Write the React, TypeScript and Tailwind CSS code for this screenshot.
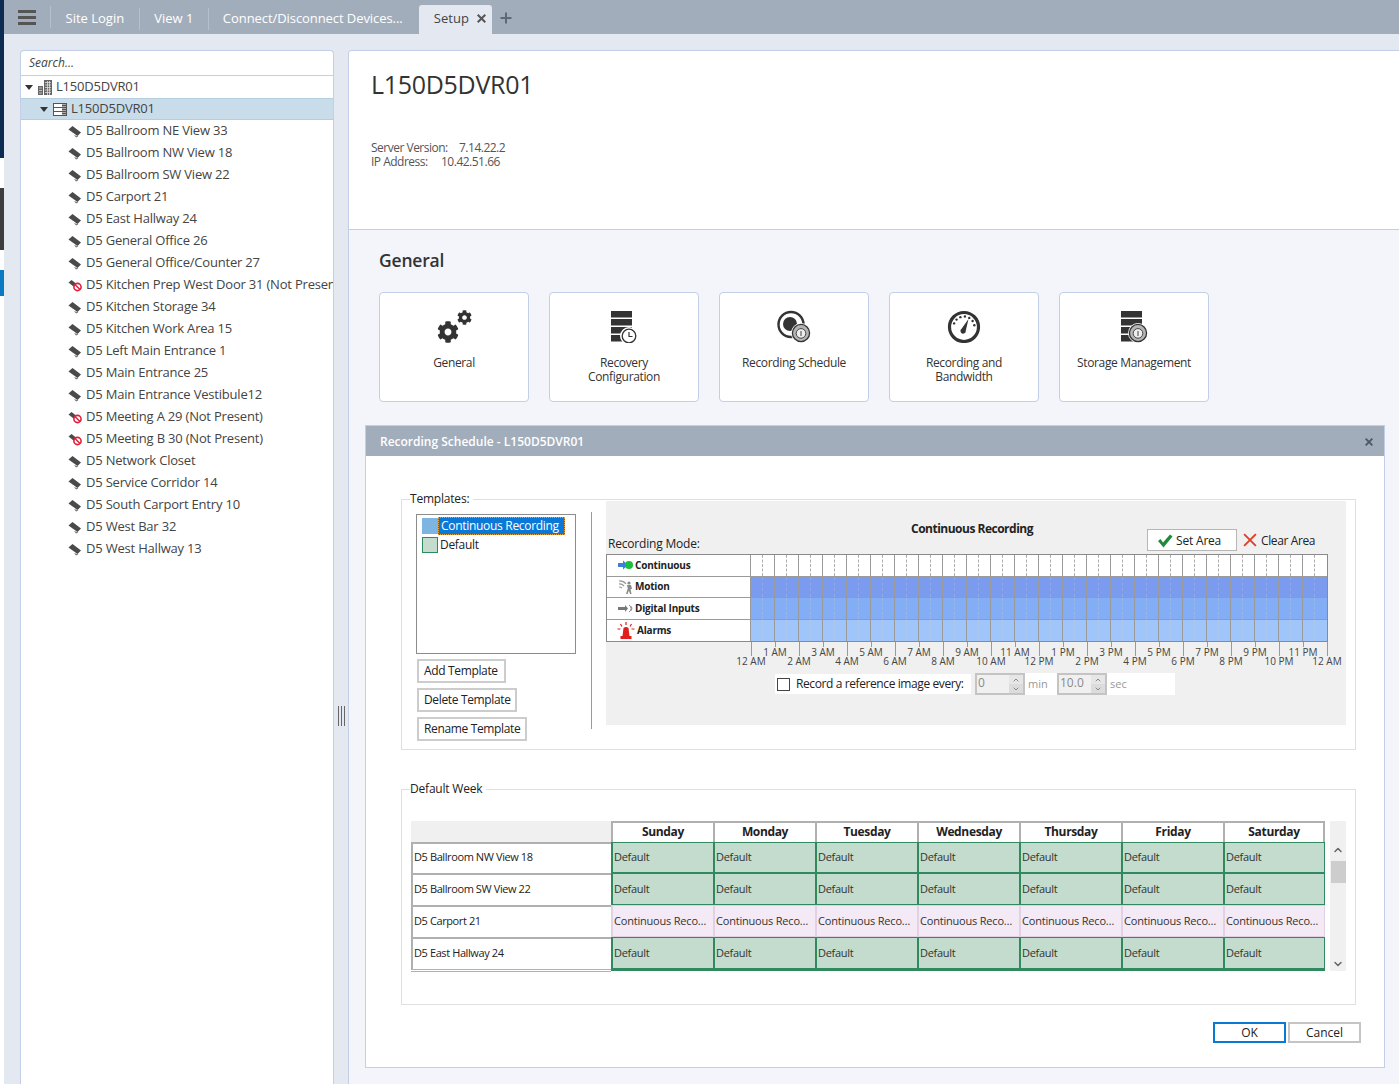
import { FaCog } from 'react-icons/fa';
import { ChevronUp, ChevronDown } from 'lucide-react';

const CAMERAS = [
  { name: 'D5 Ballroom NE View 33' },
  { name: 'D5 Ballroom NW View 18' },
  { name: 'D5 Ballroom SW View 22' },
  { name: 'D5 Carport 21' },
  { name: 'D5 East Hallway 24' },
  { name: 'D5 General Office 26' },
  { name: 'D5 General Office/Counter 27' },
  { name: 'D5 Kitchen Prep West Door 31 (Not Present)', off: true },
  { name: 'D5 Kitchen Storage 34' },
  { name: 'D5 Kitchen Work Area 15' },
  { name: 'D5 Left Main Entrance 1' },
  { name: 'D5 Main Entrance 25' },
  { name: 'D5 Main Entrance Vestibule12' },
  { name: 'D5 Meeting A 29 (Not Present)', off: true },
  { name: 'D5 Meeting B 30 (Not Present)', off: true },
  { name: 'D5 Network Closet' },
  { name: 'D5 Service Corridor 14' },
  { name: 'D5 South Carport Entry 10' },
  { name: 'D5 West Bar 32' },
  { name: 'D5 West Hallway 13' },
];

const DAYS = ['Sunday', 'Monday', 'Tuesday', 'Wednesday', 'Thursday', 'Friday', 'Saturday'];

const WEEK_ROWS = [
  { name: 'D5 Ballroom NW View 18', kind: 'default', h: 'h-[31px]' },
  { name: 'D5 Ballroom SW View 22', kind: 'default', h: 'h-[32px]' },
  { name: 'D5 Carport 21', kind: 'continuous', h: 'h-[32px]' },
  { name: 'D5 East Hallway 24', kind: 'default', h: 'h-[32px]' },
];

const HOURS = [
  '12 AM', '1 AM', '2 AM', '3 AM', '4 AM', '5 AM', '6 AM', '7 AM', '8 AM', '9 AM', '10 AM', '11 AM',
  '12 PM', '1 PM', '2 PM', '3 PM', '4 PM', '5 PM', '6 PM', '7 PM', '8 PM', '9 PM', '10 PM', '11 PM', '12 AM',
];

const HALF_HOURS = Array.from({ length: 48 }, (_, i) => i);

const GAUGE_TICKS = [-160, -135, -110, -85, -60, -35, -10].map((a) => ({
  x: 17 + 10.5 * Math.cos((a * Math.PI) / 180),
  y: 18 + 10.5 * Math.sin((a * Math.PI) / 180),
}));

function Cross({ size, stroke, color }: { size: number; stroke: number; color: string }) {
  return (
    <svg width={size} height={size} viewBox="0 0 10 10" className="shrink-0">
      <path d="M0.8 0.8 L9.2 9.2 M9.2 0.8 L0.8 9.2" stroke={color} strokeWidth={stroke} />
    </svg>
  );
}

function CameraIcon({ off }: { off?: boolean }) {
  return (
    <svg width="14" height="14" viewBox="0 0 14 14" className="shrink-0">
      {off ? (
        <>
          <path d="M0.5 4.5 L3.5 2 L8 5.5 L5.5 8.5 Z" fill="#4a4a4a" />
          <circle cx="9.5" cy="9" r="3.6" fill="#fff" stroke="#e0203a" strokeWidth="1.6" />
          <path d="M7 6.5 L12 11.5" stroke="#e0203a" strokeWidth="1.5" />
        </>
      ) : (
        <>
          <path d="M0.5 5.5 L4.5 2 L13 8.5 L9.5 12 Z" fill="#4a4a4a" />
          <path d="M6 11 L8 13.5 L10.5 12.5 Z" fill="#777" />
        </>
      )}
    </svg>
  );
}

function BuildingIcon() {
  return (
    <svg width="14" height="15" viewBox="0 0 14 15" className="shrink-0">
      <path d="M0 6 H5 V15 H0 Z M6 0 H14 V15 H6 Z" fill="#666" />
      <path d="M1 8 H4 M1 10.5 H4 M1 13 H4 M7 2.5 H13 M7 5 H13 M7 7.5 H13 M7 10 H13 M7 12.5 H13 M9.5 1 V15 M11.5 1 V15" stroke="#ddd" strokeWidth="0.8" />
    </svg>
  );
}

function ServerIcon() {
  return (
    <svg width="14" height="13" viewBox="0 0 14 13" className="shrink-0">
      <rect x="0.5" y="0.5" width="13" height="12" fill="#fff" stroke="#555" />
      <path d="M0 4.5 H14 M0 8.5 H14" stroke="#555" />
      <path d="M9 1.5 H13 V3.5 H9 Z M9 5.5 H13 V7.5 H9 Z M9 9.5 H13 V11.5 H9 Z" fill="#555" />
    </svg>
  );
}

function AlarmBadge({ cx, cy }: { cx: number; cy: number }) {
  return (
    <>
      <circle cx={cx} cy={cy} r="10" fill="#fff" />
      <circle cx={cx} cy={cy} r="8.6" fill="#b4b4b4" stroke="#333" strokeWidth="1.3" />
      <circle cx={cx} cy={cy + 0.4} r="4.8" fill="#eee" stroke="#444" />
      <path d={`M${cx} ${cy - 2} V${cy + 3}`} stroke="#444" />
    </>
  );
}

function StackBars() {
  return <path d="M4 2 H25 V8.5 H4 Z M4 10 H25 V16.5 H4 Z M4 18 H25 V24.5 H4 Z M4 26 H25 V32.5 H4 Z" fill="#333" />;
}

function CardIcon({ type }: { type: string }) {
  if (type === 'gears') {
    return (
      <div className="flex w-[35px] h-[34px] items-start">
        <FaCog className="text-[#333] mt-[12px]" size={22} />
        <FaCog className="text-[#333] mt-[1px] -ml-[2px]" size={15} />
      </div>
    );
  }
  if (type === 'recovery') {
    return (
      <svg width="34" height="34" viewBox="0 0 34 34">
        <StackBars />
        <circle cx="22" cy="27" r="9" fill="#fff" />
        <circle cx="22" cy="27" r="6.8" fill="none" stroke="#333" strokeWidth="1.3" />
        <path d="M22 23 V27.5 H25.5" fill="none" stroke="#333" strokeWidth="1.2" />
      </svg>
    );
  }
  if (type === 'schedule') {
    return (
      <svg width="36" height="34" viewBox="0 0 36 34">
        <circle cx="15" cy="15.5" r="12.5" fill="none" stroke="#333" strokeWidth="2.4" />
        <circle cx="14" cy="15" r="7" fill="#333" />
        <AlarmBadge cx={25} cy={24} />
      </svg>
    );
  }
  if (type === 'gauge') {
    return (
      <svg width="34" height="34" viewBox="0 0 34 34">
        <circle cx="17" cy="18" r="14.5" fill="none" stroke="#333" strokeWidth="3.2" />
        {GAUGE_TICKS.map((t) => (
          <circle key={t.x} cx={t.x} cy={t.y} r="1.2" fill="#333" />
        ))}
        <path d="M21.5 10 L18.8 21.5 A2.7 2.7 0 1 1 14.8 19.6 Z" fill="#333" />
      </svg>
    );
  }
  return (
    <svg width="34" height="34" viewBox="0 0 34 34">
      <StackBars />
      <AlarmBadge cx={21} cy={24} />
    </svg>
  );
}

function Card({ icon, lines }: { icon: string; lines: string[] }) {
  return (
    <div className="w-[150px] h-[110px] bg-white border border-[#c3cfe6] rounded-[4px] flex flex-col items-center pt-[16px]">
      <CardIcon type={icon} />
      <div className="mt-[13px] text-center text-[12px] leading-[14px] tracking-[-0.35px] text-[#333]">
        {lines.map((l) => (
          <div key={l}>{l}</div>
        ))}
      </div>
    </div>
  );
}

function ModeIcon({ type }: { type: string }) {
  if (type === 'continuous') {
    return (
      <svg width="16" height="10" viewBox="0 0 16 10">
        <path d="M0 3 H5 V0.5 L10 5 L5 9.5 V7 H0 Z" fill="#3d7fd9" />
        <circle cx="11" cy="5" r="4" fill="#19c03a" />
      </svg>
    );
  }
  if (type === 'motion') {
    return (
      <svg width="16" height="14" viewBox="0 0 16 14">
        <path d="M1 1 A8 8 0 0 1 8 4 M1 4 A6 6 0 0 1 6 6 M1 7 A4 4 0 0 1 4 8" fill="none" stroke="#999" strokeWidth="1.2" />
        <circle cx="11" cy="3" r="1.6" fill="#888" />
        <path d="M9 5 H13 L14 9 L12.5 9 L13.5 14 H12 L11 10.5 L9.5 14 H8 L9.8 8.5 Z" fill="#888" />
      </svg>
    );
  }
  if (type === 'inputs') {
    return (
      <svg width="16" height="9" viewBox="0 0 16 9">
        <path d="M0 3 H7 V1 L10 4.5 L7 8 V6 H0 Z" fill="#777" />
        <path d="M11 1 A4 4 0 0 1 11 8 M12.5 2 A3 3 0 0 1 12.5 7" fill="none" stroke="#888" />
      </svg>
    );
  }
  return (
    <svg width="18" height="17" viewBox="0 0 18 17">
      <path d="M5.5 14 L6.5 6 Q9 4 11.5 6 L12.5 14 Z" fill="#e01e1e" />
      <path d="M3.5 14 H14.5 V17 H3.5 Z" fill="#e01e1e" />
      <path d="M9 0 V3 M3.5 2 L5 4.5 M14.5 2 L13 4.5 M0.5 7 H3.5 M14.5 7 H17.5" stroke="#e01e1e" strokeWidth="1.2" />
    </svg>
  );
}

function ModeRow({ label, icon, gap, bg, line }: { label: string; icon: string; gap: string; bg: string; line: string }) {
  return (
    <div className={`flex h-[21.5px] border-b last:border-b-0 border-[#9a9a9a] ${bg}`}>
      <div className={`w-[144px] shrink-0 bg-white border-r border-[#9a9a9a] flex items-center pl-[10px] ${gap}`}>
        <div className="w-[18px] flex justify-center shrink-0">
          <ModeIcon type={icon} />
        </div>
        <span className="text-[10px] font-bold tracking-[-0.2px] text-[#222]">{label}</span>
      </div>
      {HALF_HOURS.map((i) => (
        <div
          key={i}
          className={i === 47 ? 'w-[12px]' : i % 2 === 0 ? `w-[12px] border-r border-dashed ${line}` : 'w-[12px] border-r border-[#9a9a9a]'}
        />
      ))}
    </div>
  );
}

function Spinner({ value }: { value: string }) {
  return (
    <div className="w-[50px] h-[22px] border-2 border-[#c4c4c4] bg-[#f0f0f0] flex items-start justify-between">
      <span className="pl-[1px] text-[12px] leading-[16px] text-[#8a8a8a]">{value}</span>
      <div className="w-[14px] h-full flex flex-col">
        <div className="flex-1 bg-[#e6e6e6] flex items-center justify-center">
          <ChevronUp size={8} strokeWidth={3} className="text-[#888]" />
        </div>
        <div className="flex-1 bg-[#dcdcdc] flex items-center justify-center">
          <ChevronDown size={8} strokeWidth={3} className="text-[#888]" />
        </div>
      </div>
    </div>
  );
}

function TemplateButton({ label, w }: { label: string; w: string }) {
  return (
    <button className={`${w} h-[24px] bg-white border-2 border-[#cccccc] text-[12px] text-[#222] tracking-[-0.35px] flex items-center pl-[5px]`}>
      {label}
    </button>
  );
}

function Tab({ label }: { label: string }) {
  return <div className="h-[22px] flex items-center border-r border-[#b6bfcb] px-[14.5px] text-[13px] text-white">{label}</div>;
}

export default function App() {
  return (
    <div className="w-[1399px] h-[1084px] overflow-hidden flex bg-[#e4e8f1]" style={{ fontFamily: '"Open Sans", "Noto Sans", sans-serif' }}>
      {/* bit of the desktop showing behind the window */}
      <div className="w-[4px] h-full shrink-0 flex flex-col bg-white">
        <div className="h-[158px] bg-[#0b2b52]" />
        <div className="h-[30px]" />
        <div className="h-[62px] bg-[#3d3d3d]" />
        <div className="h-[20px]" />
        <div className="h-[26px] bg-[#0a78c2]" />
      </div>

      <div className="flex-1 min-w-0 flex flex-col">
        <div className="h-[34px] shrink-0 bg-[#a2adbb] flex items-end">
          <div className="self-center h-[22px] flex items-center border-r border-[#b6bfcb] pl-[14px] pr-[14px]">
            <div className="w-[18px] flex flex-col gap-[3px]">
              <div className="h-[3px] bg-[#555]" />
              <div className="h-[3px] bg-[#555]" />
              <div className="h-[3px] bg-[#555]" />
            </div>
          </div>
          <div className="self-center flex pt-[3px]">
            <Tab label="Site Login" />
            <Tab label="View 1" />
            <div className="h-[22px] flex items-center pl-[14px] text-[13px] tracking-[-0.07px] text-white w-[210px]">Connect/Disconnect Devices...</div>
          </div>
          <div className="h-[29px] w-[73px] bg-[#e4e8f1] rounded-t-[3px] flex items-center pl-[15px] pb-[2px] gap-[8px] text-[13px] text-[#444]">
            Setup
            <Cross size={9} stroke={2.2} color="#555" />
          </div>
          <svg width="12" height="12" viewBox="0 0 12 12" className="self-center ml-[8px] mt-[2px]">
            <path d="M6 0.5 V11.5 M0.5 6 H11.5" stroke="#5f6976" strokeWidth="2" />
          </svg>
        </div>

        <div className="flex-1 min-h-0 flex pt-[16px] pl-[16px]">
          <div className="w-[314px] shrink-0 bg-white border border-[#c3cfe6] border-b-0 rounded-t-[4px] overflow-hidden">
            <div className="h-[25px] border-b border-[#c3cfe6] pl-[8px] flex items-center text-[12px] italic text-[#444]">Search...</div>
            <div className="h-[22px] pl-[4px] flex items-center">
              <div className="w-0 h-0 border-x-[4px] border-x-transparent border-t-[5px] border-t-[#333] mr-[5px]" />
              <BuildingIcon />
              <span className="ml-[4px] text-[13px] text-[#444] tracking-[-0.2px]">L150D5DVR01</span>
            </div>
            <div className="h-[22px] pl-[19px] flex items-center bg-[#c9dcea] border-y border-[#b4cde0]">
              <div className="w-0 h-0 border-x-[4px] border-x-transparent border-t-[5px] border-t-[#333] mr-[5px]" />
              <ServerIcon />
              <span className="ml-[4px] text-[13px] text-[#444] tracking-[-0.2px]">L150D5DVR01</span>
            </div>
            {CAMERAS.map((c) => (
              <div key={c.name} className="h-[22px] pl-[47px] flex items-center gap-[4px] whitespace-nowrap">
                <CameraIcon off={c.off} />
                <span className="text-[13px] text-[#444] tracking-[-0.2px]">{c.name}</span>
              </div>
            ))}
          </div>

          <div className="w-[15px] -mr-[1px] shrink-0 flex justify-center pt-[656px]">
            <div className="h-[20px] w-[7px] border-x border-[#666] flex justify-center">
              <div className="w-px h-full bg-[#666]" />
            </div>
          </div>

          <div className="flex-1 min-w-0 border-l border-t border-[#c3cfe6] rounded-tl-[4px] bg-[#f4f5fa] overflow-hidden flex flex-col">
            <div className="h-[179px] shrink-0 bg-white border-b border-[#c3cfe6] pl-[22px] pt-[16px]">
              <h1 className="text-[25px] leading-[34px] text-[#333] tracking-[-0.3px]">L150D5DVR01</h1>
              <div className="mt-[40px] text-[12px] leading-[14px] tracking-[-0.5px] text-[#555]">
                <div className="flex">
                  <span className="w-[88px]">Server Version:</span>
                  <span>7.14.22.2</span>
                </div>
                <div className="flex">
                  <span className="w-[70px]">IP Address:</span>
                  <span>10.42.51.66</span>
                </div>
              </div>
            </div>

            <div className="pl-[30px] pt-[17px] text-[17.5px] leading-[26px] text-[#333] font-semibold tracking-[-0.2px]">General</div>
            <div className="pl-[30px] pt-[19px] flex gap-[20px]">
              <Card icon="gears" lines={['General']} />
              <Card icon="recovery" lines={['Recovery', 'Configuration']} />
              <Card icon="schedule" lines={['Recording Schedule']} />
              <Card icon="gauge" lines={['Recording and', 'Bandwidth']} />
              <Card icon="storage" lines={['Storage Management']} />
            </div>

            <div className="mt-[23px] ml-[16px] w-[1020px] h-[643px] shrink-0 bg-white border border-[#c3cfe6] flex flex-col">
              <div className="h-[30px] shrink-0 bg-[#a2adbb] pl-[14px] pr-[11px] pt-[2px] flex items-center justify-between text-[12px] font-semibold text-white">
                Recording Schedule - L150D5DVR01
                <Cross size={8} stroke={2.4} color="#4f5966" />
              </div>

              <div className="pt-[36px] pl-[35px]">
                <fieldset className="w-[955px] h-[258px] border border-[#dfdfdf]">
                  <legend className="ml-[8px] pr-[4px] text-[12px] leading-[14px] tracking-[-0.2px] text-[#222]">Templates:</legend>
                  <div className="flex items-start pl-[14px]">
                    <div className="w-[160px] shrink-0 pt-[8px]">
                      <div className="h-[140px] border border-[#8c8c8c] pt-[1px] pl-[5px] text-[12px] tracking-[-0.3px]">
                        <div className="flex items-center h-[19px]">
                          <div className="w-[16px] h-[16px] bg-[#7cb4e2]" />
                          <div className="h-[18px] w-[127px] bg-[#0a78d7] text-white pl-[2px] border border-dotted border-[#e6a040] leading-[15px]">Continuous Recording</div>
                        </div>
                        <div className="flex items-center h-[19px]">
                          <div className="w-[16px] h-[16px] bg-[#c3dccd] border border-[#318a5f]" />
                          <div className="pl-[2px] text-[#222]">Default</div>
                        </div>
                      </div>
                      <div className="pl-[1px] pt-[5px] flex flex-col gap-[5px]">
                        <TemplateButton label="Add Template" w="w-[89px]" />
                        <TemplateButton label="Delete Template" w="w-[100px]" />
                        <TemplateButton label="Rename Template" w="w-[110px]" />
                      </div>
                    </div>

                    <div className="ml-[15px] mt-[6px] w-px h-[217px] bg-[#9a9a9a] shrink-0" />

                    <div className="ml-[14px] -mt-[5px] w-[740px] h-[224px] shrink-0 bg-[#f0f0f0]">
                      <div className="pt-[21px] w-[732px] text-center text-[12px] leading-[14px] font-bold tracking-[-0.5px] text-[#222]">Continuous Recording</div>
                      <div className="-mt-[7px] h-[22px] flex justify-between items-end pl-[2px] pr-[31px] text-[12px] tracking-[-0.2px] text-[#222]">
                        <span className="leading-[14px]">Recording Mode:</span>
                        <div className="flex items-center">
                          <div className="w-[90px] h-[22px] bg-white border border-[#b5b5b5] flex items-center pl-[9px] pt-[1px] gap-[3px]">
                            <svg width="16" height="14" viewBox="0 0 16 14">
                              <path d="M1 7 L3.5 5 L6 8.5 L13 0.5 L15.5 2.5 L6.5 13.5 Z" fill="#1f8a3a" />
                            </svg>
                            Set Area
                          </div>
                          <div className="ml-[6px]">
                            <Cross size={14} stroke={1.4} color="#e0402a" />
                          </div>
                          <span className="ml-[4px] pt-[1px] tracking-[-0.4px]">Clear Area</span>
                        </div>
                      </div>

                      <div className="mt-[3px] w-[722px] border border-[#8a8a8a]">
                        <ModeRow label="Continuous" icon="continuous" gap="gap-0" bg="bg-white" line="border-[#b0b0b0]" />
                        <ModeRow label="Motion" icon="motion" gap="gap-0" bg="bg-[#7b9bef]" line="border-[#92a8e6]" />
                        <ModeRow label="Digital Inputs" icon="inputs" gap="gap-0" bg="bg-[#83aef5]" line="border-[#9ab6e8]" />
                        <ModeRow label="Alarms" icon="alarms" gap="gap-[2px]" bg="bg-[#9fc5fb]" line="border-[#b0c8e6]" />
                      </div>

                      <div className="ml-[133px] flex h-[25px]">
                        {HOURS.map((h, i) => (
                          <div key={i} className="w-[24px] flex flex-col items-center">
                            <div className={i % 2 === 0 ? 'w-px h-[14px] bg-[#9a9a9a]' : 'w-px h-[5px] bg-[#9a9a9a]'} />
                            <span className="text-[10px] leading-[10px] whitespace-nowrap text-[#444]">{h}</span>
                          </div>
                        ))}
                      </div>

                      <div className="mt-[6px] ml-[169px] flex items-center">
                        <div className="w-[196px] h-[20px] bg-white flex items-center pl-[2px] gap-[6px] text-[12px] tracking-[-0.4px] text-[#222]">
                          <div className="w-[13px] h-[13px] border border-[#444] bg-white shrink-0" />
                          Record a reference image every:
                        </div>
                        <div className="ml-[4px]">
                          <Spinner value="0" />
                        </div>
                        <div className="flex items-center bg-white h-[22px] w-[150px] pl-[3px] text-[11px] text-[#999]">
                          <span className="w-[29px]">min</span>
                          <Spinner value="10.0" />
                          <span className="ml-[3px]">sec</span>
                        </div>
                      </div>
                    </div>
                  </div>
                </fieldset>

                <fieldset className="mt-[32px] w-[955px] h-[223px] border border-[#dfdfdf]">
                  <legend className="ml-[8px] pr-[4px] text-[12px] leading-[14px] tracking-[-0.2px] text-[#222]">Default Week</legend>
                  <div className="pt-[25px] pl-[9px] flex items-start">
                    <div className="w-[914px] shrink-0">
                      <div className="grid grid-cols-[200px_repeat(7,102px)] h-[21px]">
                        <div className="bg-[#f0f0f0]" />
                        {DAYS.map((d) => (
                          <div key={d} className="border-2 border-b-0 border-r-0 last:border-r-2 border-[#b0b0b0] bg-white flex items-center justify-center pb-[3px] text-[12px] font-bold tracking-[-0.35px] text-[#222]">
                            {d}
                          </div>
                        ))}
                      </div>
                      {WEEK_ROWS.map((r) => (
                        <div key={r.name} className={`grid grid-cols-[200px_repeat(7,102px)] ${r.h}`}>
                          <div className="border-2 border-r-0 border-b-0 border-[#b0b0b0] flex items-center pl-[1px] pb-[2px] text-[11px] tracking-[-0.4px] text-[#222]">{r.name}</div>
                          {DAYS.map((d) =>
                            r.kind === 'default' ? (
                              <div key={d} className="border-l-2 border-y last:border-r border-[#318a5f] bg-[#c3dccd] flex items-center pl-[1px] text-[11px] tracking-[-0.3px] text-[#333]">
                                Default
                              </div>
                            ) : (
                              <div key={d} className="border-l-2 border-y last:border-r border-[#e2d1e4] bg-[#f3eaf5] flex items-center pl-[1px] text-[11px] tracking-[-0.2px] whitespace-nowrap overflow-hidden text-[#333]">
                                Continuous Reco…
                              </div>
                            ),
                          )}
                        </div>
                      ))}
                      <div className="flex h-[2px]">
                        <div className="w-[200px] h-[3px] border-y border-[#b0b0b0]" />
                        <div className="w-[714px] bg-[#318a5f]" />
                      </div>
                    </div>

                    <div className="ml-[5px] w-[16px] h-[150px] bg-[#f0f0f0] flex flex-col items-center">
                      <div className="h-[21px] w-full" />
                      <div className="w-full h-[129px] flex flex-col items-center">
                        <ChevronUp size={12} strokeWidth={3} className="mt-[2px] text-[#666]" />
                        <div className="mt-[5px] w-[15px] h-[22px] bg-[#cdcdcd]" />
                        <ChevronDown size={12} strokeWidth={3} className="mt-auto mb-[1px] text-[#666]" />
                      </div>
                    </div>
                  </div>
                </fieldset>

                <div className="mt-[17px] w-[960px] flex justify-end gap-[2px] text-[12px] text-[#222]">
                  <button className="w-[73px] h-[21px] bg-white border-2 border-[#0a78d7]">OK</button>
                  <button className="w-[73px] h-[21px] bg-white border-2 border-[#c4c4c4]">Cancel</button>
                </div>
              </div>
            </div>
          </div>
        </div>
      </div>
    </div>
  );
}
